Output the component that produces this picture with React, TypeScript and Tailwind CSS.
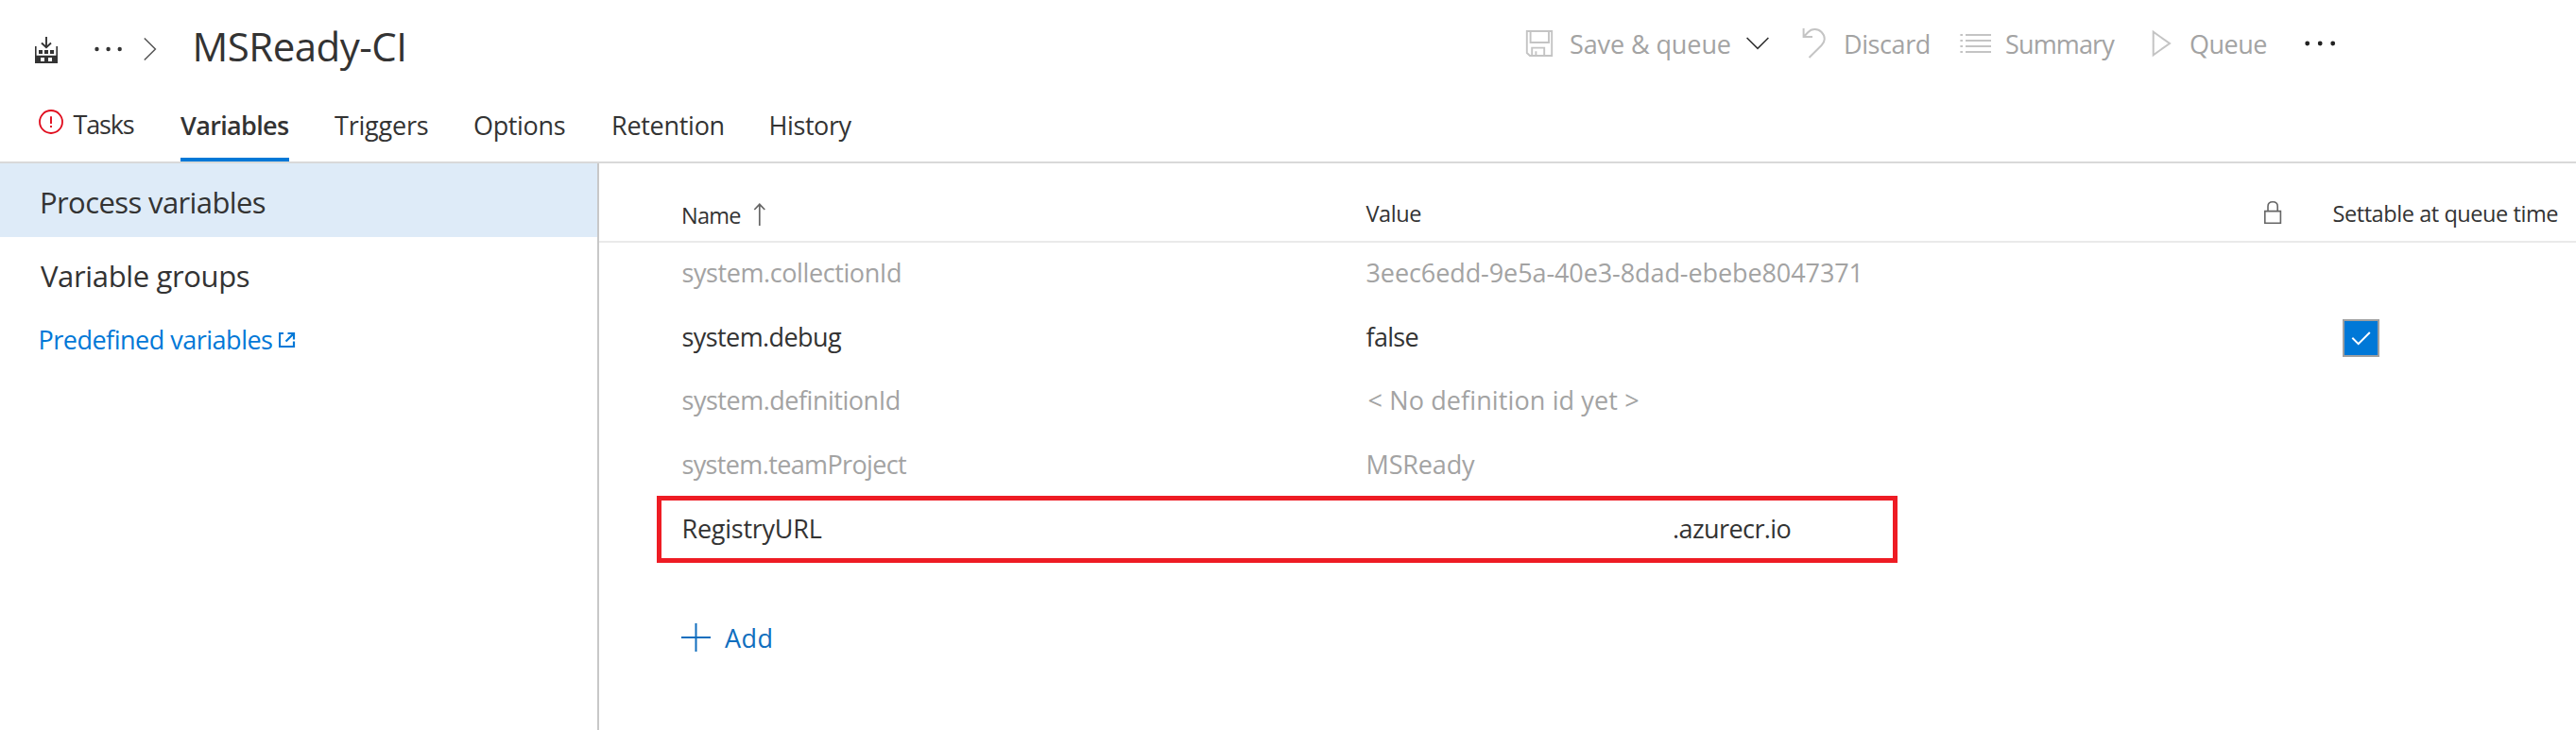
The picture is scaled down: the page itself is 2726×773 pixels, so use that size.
import type { ReactNode } from "react";

function Icon({ box, className, children }: { box: string; className: string; children: ReactNode }) {
  return (
    <svg viewBox={box} fill="none" className={`block shrink-0 ${className}`} aria-hidden="true">
      {children}
    </svg>
  );
}

function TopBar() {
  return (
    <div className="flex h-[98px] items-start pl-9 whitespace-nowrap">
      <Icon box="36 39 26 28" className="mt-[39px] h-7 w-[26px]">
        <path d="M49 39V50M44 45.5L49 50.3L54 45.5" stroke="#333" strokeWidth="1.9" />
        <path
          fill="#333"
          fillRule="evenodd"
          d="M37 49H38.6V58.7H59.4V49H61V67H37ZM43 61V65H47V61ZM51 61V65H55V61Z"
        />
        <path fill="#333" d="M41 53H45V57H41ZM47 53H51V57H47ZM53 53H57V57H53Z" />
      </Icon>
      <Icon box="98 44 34 16" className="mt-11 ml-9 h-4 w-[34px]">
        <circle cx="102.5" cy="52" r="2.2" fill="#333" />
        <circle cx="114.6" cy="52" r="2.2" fill="#333" />
        <circle cx="126.7" cy="52" r="2.2" fill="#333" />
      </Icon>
      <Icon box="150 38 17 28" className="mt-[38px] ml-[18px] h-7 w-[17px]">
        <path d="M152.8 40.5L164.4 52L152.8 63.5" stroke="#555" strokeWidth="1.5" />
      </Icon>
      <h1 className="ml-[36.5px] w-[1410.5px] shrink-0 text-[42px] leading-[98px] tracking-[-0.51px]">MSReady-CI</h1>

      <div className="flex items-start text-[27px] leading-[93px] text-[#a3a3a3]">
        <Icon box="1614 31 30 30" className="mt-[31px] h-[30px] w-[30px]">
          <path
            d="M1615.8 33H1642.2V59H1619L1615.8 56ZM1619.6 33V45H1639V33M1621.2 59V50.6H1634.2V59M1625.4 59V54.2"
            stroke="#c4c4c4"
            strokeWidth="1.9"
          />
        </Icon>
        <span className="ml-[17px] w-[187px] tracking-[-0.1px]">Save &amp; queue</span>
        <Icon box="1848 38 24 16" className="mt-[38px] h-4 w-6">
          <path d="M1848.6 40L1860 51.4L1871.4 40" stroke="#333" strokeWidth="1.6" />
        </Icon>
        <Icon box="1907 29 26 34" className="mt-[29px] ml-[35px] h-[34px] w-[26px]">
          <path
            d="M1908.6 30V39H1918M1908.6 39L1913.5 34C1917 30.3 1923.5 29.8 1927.6 34C1932.2 38.7 1931.4 44.2 1927.6 48L1914.5 61"
            stroke="#c4c4c4"
            strokeWidth="2"
          />
        </Icon>
        <span className="ml-[18px] w-[123px] tracking-[-0.4px]">Discard</span>
        <Icon box="2074 34 34 24" className="mt-[34px] h-6 w-[34px]">
          <path
            d="M2074.4 37H2077M2074.4 43H2077M2074.4 49H2077M2074.4 55H2077M2080 37H2107M2080 43H2107M2080 49H2107M2080 55H2107"
            stroke="#c4c4c4"
            strokeWidth="2"
          />
        </Icon>
        <span className="ml-3.5 w-[155px] tracking-[-0.85px]">Summary</span>
        <Icon box="2277 31 21 30" className="mt-[31px] h-[30px] w-[21px]">
          <path d="M2278.7 33.8V58.2L2296 46Z" stroke="#c4c4c4" strokeWidth="2" />
        </Icon>
        <span className="ml-[19px] w-[122px] tracking-[-0.5px]">Queue</span>
        <Icon box="2439 38 33 16" className="mt-[38px] h-4 w-[33px]">
          <circle cx="2441.7" cy="46" r="2.4" fill="#222" />
          <circle cx="2455.2" cy="46" r="2.4" fill="#222" />
          <circle cx="2468.7" cy="46" r="2.4" fill="#222" />
        </Icon>
      </div>
    </div>
  );
}

function Tabs() {
  return (
    <nav className="flex h-[75px] items-start border-b-2 border-[#d9d9d9] pl-[41px] text-[27px] leading-[69px] whitespace-nowrap">
      <Icon box="41 116 27 26" className="mt-[18px] h-[26px] w-[27px]">
        <circle cx="54" cy="129" r="12" stroke="#e00b1c" strokeWidth="1.8" />
        <path d="M54 123.2V131M54 133V135" stroke="#e00b1c" strokeWidth="1.9" />
      </Icon>
      <span className="ml-[9.5px] w-[113.5px] leading-[67px] tracking-[-1.15px]">Tasks</span>
      <span className="h-[73px] w-[115px] border-b-4 border-[#0078d7] font-semibold tracking-[-0.65px]">Variables</span>
      <span className="ml-12 w-[147px] tracking-[-0.2px]">Triggers</span>
      <span className="w-[146px] tracking-[-0.35px]">Options</span>
      <span className="w-[166.5px] tracking-[-0.28px]">Retention</span>
      <span className="tracking-[-0.4px]">History</span>
    </nav>
  );
}

function Sidebar() {
  return (
    <aside className="w-[634px] shrink-0 border-r-2 border-[#c8c8c8] text-[31px] leading-[74px]">
      <div className="h-[78px] bg-[#deebf8] pt-1 pl-[42px] tracking-[-0.6px]">Process variables</div>
      <div className="h-[78px] pt-1 pl-[43px] tracking-[-0.36px]">Variable groups</div>
      <a className="flex items-start pl-[40.5px] text-[27px] leading-[61px] text-[#0078d7]">
        <span className="w-[254.5px] tracking-[-0.5px]">Predefined variables</span>
        <Icon box="295 351 18 18" className="mt-[22px] h-[18px] w-[18px]">
          <path d="M300 353H296V367H311V361.5M302.5 361.5L310.5 353.5M304.5 353H311V359.5" stroke="#0078d7" strokeWidth="2.2" />
        </Icon>
      </a>
    </aside>
  );
}

type Row = {
  name: string;
  value: string;
  nameClass: string;
  valueClass: string;
  rowClass: string;
  checked?: boolean;
  marked?: boolean;
};

const rows: Row[] = [
  {
    name: "system.collectionId",
    value: "3eec6edd-9e5a-40e3-8dad-ebebe8047371",
    nameClass: "tracking-[-0.41px]",
    valueClass: "tracking-[-0.09px]",
    rowClass: "h-[68px] text-[#a3a3a3]",
  },
  {
    name: "system.debug",
    value: "false",
    nameClass: "tracking-[-0.58px]",
    valueClass: "tracking-[-0.7px]",
    rowClass: "h-[67px]",
    checked: true,
  },
  {
    name: "system.definitionId",
    value: "< No definition id yet >",
    nameClass: "tracking-[-0.48px]",
    valueClass: "pl-0.5 tracking-[0.12px]",
    rowClass: "h-[68px] text-[#a3a3a3]",
  },
  {
    name: "system.teamProject",
    value: "MSReady",
    nameClass: "tracking-[-0.64px]",
    valueClass: "tracking-[-0.15px]",
    rowClass: "h-[68px] text-[#a3a3a3]",
  },
  {
    name: "RegistryURL",
    value: ".azurecr.io",
    nameClass: "tracking-[-0.25px]",
    valueClass: "pl-[324.5px] tracking-[-0.58px]",
    rowClass: "h-[68px]",
    marked: true,
  },
];

function VariableTable() {
  return (
    <main className="min-w-0 flex-1 whitespace-nowrap">
      <div className="flex h-[84px] items-start border-b-2 border-[#eaeaea] pt-6 pl-[87px] text-[23.5px] leading-[58px]">
        <span className="mt-0.5 w-[76px] tracking-[-0.74px]">Name</span>
        <Icon box="797 213 14 28" className="mt-4 h-7 w-3.5">
          <path d="M803.8 239V216M798.3 222L803.8 216.3L809.3 222" stroke="#666" strokeWidth="1.7" />
        </Icon>
        <span className="ml-[634.5px] w-[949.5px] tracking-[-0.44px]">Value</span>
        <Icon box="2395 212 20 26" className="mt-[15px] h-[26px] w-5">
          <path
            d="M2396.8 223.6H2413.4V236.3H2396.8ZM2400 223.6V218.5C2400 215.5 2402 213.8 2405.1 213.8C2408.2 213.8 2410.2 215.5 2410.2 218.5V223.6"
            stroke="#666"
            strokeWidth="1.6"
          />
        </Icon>
        <span className="ml-[53.5px] tracking-[-0.43px]">Settable at queue time</span>
      </div>

      {rows.map((row) => (
        <div key={row.name} className={`relative flex items-start pl-[87.5px] text-[27px] leading-[63px] ${row.rowClass}`}>
          <span className={`w-[724px] shrink-0 ${row.nameClass}`}>{row.name}</span>
          <span className={`w-[1033.5px] shrink-0 ${row.valueClass}`}>{row.value}</span>
          {row.checked && (
            <span className="mt-[13px] h-10 w-[39px] border-2 border-[#a0a0a0] bg-[#0078d7]">
              <Icon box="2481 340 35 36" className="h-9 w-[35px]">
                <path d="M2489.3 357.8L2495.7 364.2L2507.8 352" stroke="#fff" strokeWidth="2" />
              </Icon>
            </span>
          )}
          {row.marked && <span className="absolute -top-[3px] left-[61px] h-[71px] w-[1313px] border-[5px] border-[#ee1c24]" />}
        </div>
      ))}

      <div className="mt-10 flex items-start pl-[87px] text-[27px] leading-[79px] text-[#106ebe]">
        <Icon box="721 659 31 32" className="mt-[23px] h-8 w-[31px]">
          <path d="M721 675H752M736.5 660V690" stroke="#106ebe" strokeWidth="2" />
        </Icon>
        <span className="ml-[15px] tracking-[0.4px]">Add</span>
      </div>
    </main>
  );
}

export default function App() {
  return (
    <div className="flex h-[773px] w-[2726px] flex-col overflow-hidden bg-white font-['Open_Sans',sans-serif] text-[#333]">
      <TopBar />
      <Tabs />
      <div className="flex flex-1">
        <Sidebar />
        <VariableTable />
      </div>
    </div>
  );
}
